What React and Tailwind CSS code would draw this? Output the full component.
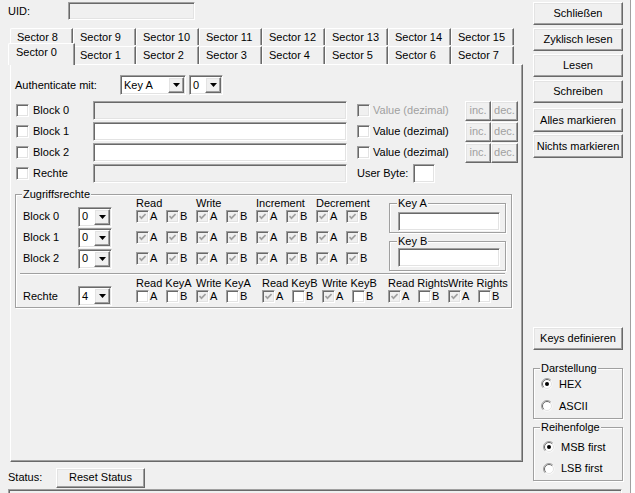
const raised =
  "bg-[#f0f0f0] border border-t-white border-l-white border-r-[#696969] border-b-[#696969] shadow-[inset_-1px_-1px_0_#a0a0a0,inset_1px_1px_0_#e3e3e3]";
const sunken =
  "border border-t-[#a0a0a0] border-l-[#a0a0a0] border-r-white border-b-white shadow-[inset_1px_1px_0_#696969,inset_-1px_-1px_0_#e3e3e3]";

const Btn = ({ children, className = "", disabled }) => (
  <button
    type="button"
    className={`${raised} shrink-0 flex items-center justify-center leading-none ${
      disabled ? "text-[#a0a0a0]" : "text-black"
    } ${className}`}
  >
    {children}
  </button>
);

const Field = ({ white, className = "" }) => (
  <div className={`${sunken} ${white ? "bg-white" : "bg-[#f0f0f0]"} ${className}`} />
);

const Combo = ({ value, className = "" }) => (
  <div className={`${sunken} bg-white flex items-stretch ${className}`}>
    <span className="flex-1 pl-[3px] flex items-center leading-none">{value}</span>
    <span className={`${raised} w-[16px] m-[1px] flex items-center justify-center`}>
      <svg width="7" height="4" viewBox="0 0 7 4">
        <path d="M0 0h7L3.5 4z" fill="black" />
      </svg>
    </span>
  </div>
);

const Check = ({ checked, grey }) => (
  <span
    className={`${sunken} ${
      grey ? "bg-[#f0f0f0]" : "bg-white"
    } w-[13px] h-[13px] shrink-0 flex items-center justify-center`}
  >
    {checked && (
      <svg width="7" height="7" viewBox="0 0 7 7">
        <path d="M0.5 3 L2.5 5.2 L6.6 1" stroke={grey ? "#a0a0a0" : "black"} strokeWidth="1.7" fill="none" />
      </svg>
    )}
  </span>
);

const Radio = ({ checked }) => (
  <svg width="12" height="12" viewBox="0 0 12 12" className="shrink-0">
    <circle cx="6" cy="6" r="5.5" fill="white" />
    <path d="M2.1 9.9 A5.5 5.5 0 0 1 9.9 2.1" stroke="#a0a0a0" fill="none" />
    <path d="M2.8 9.2 A4.5 4.5 0 0 1 9.2 2.8" stroke="#696969" fill="none" />
    <path d="M9.2 2.8 A4.5 4.5 0 0 1 2.8 9.2" stroke="#e3e3e3" fill="none" />
    {checked && <circle cx="6" cy="6" r="2" fill="black" />}
  </svg>
);

const Group = ({ title, className = "", legend = "ml-[6px]", children }) => (
  <fieldset className={`shrink-0 border border-[#a0a0a0] shadow-[1px_1px_0_white,inset_1px_1px_0_white] ${className}`}>
    <legend className={`${legend} px-[1px] leading-[12px] bg-[#f0f0f0]`}>{title}</legend>
    {children}
  </fieldset>
);

const Cell = ({ label, checked }) => (
  <span className="w-[30px] flex items-center gap-[1px]">
    <Check checked={checked} grey={checked} />
    <span className="leading-none">{label}</span>
  </span>
);

const topTabs = [8, 9, 10, 11, 12, 13, 14, 15];
const bottomTabs = [1, 2, 3, 4, 5, 6, 7];
const rechte = [
  [false, false, true, false],
  [true, false, true, false],
  [true, false, true, false],
];

export default function App() {
  return (
    <div className="w-[635px] h-[493px] bg-white overflow-hidden">
      <div className="w-[631px] h-[493px] bg-[#f0f0f0] border-r border-[#a0a0a0] text-[11px] text-black font-['Liberation_Sans',Arial,sans-serif] flex flex-col">
        <div className="flex h-[466px] shrink-0">
          {/* left part */}
          <div className="w-[533px] flex flex-col">
            <div className="flex items-center pt-[2px]">
              <span className="w-[68px] pl-[8px]">UID:</span>
              <Field className="w-[127px] h-[18px]" />
            </div>

            <div className="mt-[8px] pl-[10px] flex h-[17px]">
              {topTabs.map((n) => (
                <div
                  key={n}
                  className="w-[63px] h-[17px] border-t border-l border-t-white border-l-white border-r border-r-[#696969] shadow-[inset_-1px_0_0_#a0a0a0] rounded-tl-[2px] pl-[6px] pt-[2px] leading-[13px]"
                >
                  Sector {n}
                </div>
              ))}
            </div>
            <div className="pl-[8px] flex items-end h-[19px] relative z-10">
              <div className="w-[67px] h-[22px] mr-[-2px] mb-[-1px] bg-[#f0f0f0] border-t border-l border-t-white border-l-white border-r border-r-[#696969] shadow-[inset_-1px_0_0_#a0a0a0] rounded-tl-[2px] pl-[7px] pt-[2px] leading-[13px] relative z-10">
                Sector 0
              </div>
              {bottomTabs.map((n) => (
                <div
                  key={n}
                  className="w-[63px] h-[18px] border-t border-l border-t-white border-l-white border-r border-r-[#696969] shadow-[inset_-1px_0_0_#a0a0a0] rounded-tl-[2px] pl-[6px] pt-[2px] leading-[13px]"
                >
                  Sector {n}
                </div>
              ))}
            </div>

            {/* tab panel */}
            <div className="ml-[10px] w-[513px] h-[398px] border border-t-white border-l-white border-r-[#696969] border-b-[#696969] shadow-[inset_-1px_-1px_0_#a0a0a0] pl-[4px] pt-[10px] flex flex-col">
              <div className="flex items-center h-[20px]">
                <span className="w-[105px]">Authenticate mit:</span>
                <Combo value="Key A" className="w-[66px] h-[20px]" />
                <Combo value="0" className="w-[34px] h-[20px] ml-[3px]" />
              </div>

              <div className="mt-[5px] flex flex-col">
                {[0, 1, 2].map((i) => (
                  <div key={i} className="h-[21px] flex items-center">
                    <span className="w-[78px] flex items-center">
                      <span className="ml-[1px]">
                        <Check />
                      </span>
                      <span className="ml-[4px]">Block {i}</span>
                    </span>
                    <Field white={i > 0} className="w-[254px] h-[19px]" />
                    <span className="ml-[10px] w-[108px] flex items-center gap-[3px]">
                      <Check grey={i === 0} />
                      <span className={i === 0 ? "text-[#a0a0a0]" : ""}>Value (dezimal)</span>
                    </span>
                    <Btn disabled className="w-[26px] h-[20px]">
                      inc.
                    </Btn>
                    <Btn disabled className="w-[27px] h-[20px]">
                      dec.
                    </Btn>
                  </div>
                ))}
                <div className="h-[21px] flex items-center">
                  <span className="w-[78px] flex items-center">
                    <span className="ml-[1px]">
                      <Check />
                    </span>
                    <span className="ml-[4px]">Rechte</span>
                  </span>
                  <Field className="w-[254px] h-[19px]" />
                  <span className="ml-[10px] w-[56px]">User Byte:</span>
                  <Field white className="w-[22px] h-[19px]" />
                </div>
              </div>

              <Group title="Zugriffsrechte" className="mt-[4px] w-[497px]">
                <div className="-mt-[3px] flex items-start">
                  <div className="flex flex-col pl-[7px]">
                    <div className="h-[9px] leading-[12px] flex pl-[113px]">
                      {["Read", "Write", "Increment", "Decrement"].map((h) => (
                        <span key={h} className="w-[60px]">
                          {h}
                        </span>
                      ))}
                    </div>
                    {[0, 1, 2].map((i) => (
                      <div key={i} className="h-[21px] flex items-center">
                        <span className="w-[55px]">Block {i}</span>
                        <Combo value="0" className="w-[34px] h-[20px]" />
                        <div className="flex ml-[24px]">
                          {[0, 1, 2, 3].map((k) => (
                            <div key={k} className="flex">
                              <Cell label="A" checked />
                              <Cell label="B" checked />
                            </div>
                          ))}
                        </div>
                      </div>
                    ))}
                  </div>
                  <div className="ml-[13px] flex flex-col">
                    <Group title="Key A" legend="ml-[7px]" className="w-[117px]">
                      <Field white className="ml-[8px] mt-[3px] mb-[1px] w-[102px] h-[19px]" />
                    </Group>
                    <Group title="Key B" legend="ml-[7px]" className="w-[117px] mt-[2px]">
                      <Field white className="ml-[8px] mt-[1px] mb-[3px] w-[102px] h-[19px]" />
                    </Group>
                  </div>
                </div>

                <div className="mt-[2px] ml-[4px] w-[485px] h-[2px] border-t border-t-[#a0a0a0] border-b border-b-white" />

                <div className="mt-[2px] h-[9px] leading-[12px] flex gap-[6px] pl-[120px] whitespace-nowrap">
                  {[
                    ["Read KeyA", "Write KeyA"],
                    ["Read KeyB", "Write KeyB"],
                    ["Read Rights", "Write Rights"],
                  ].map((pair) => (
                    <div key={pair[0]} className="flex">
                      {pair.map((h) => (
                        <span key={h} className="w-[60px]">
                          {h}
                        </span>
                      ))}
                    </div>
                  ))}
                </div>
                <div className="h-[20px] flex items-center pl-[7px] mb-[1px]">
                  <span className="w-[55px]">Rechte</span>
                  <Combo value="4" className="w-[34px] h-[20px]" />
                  <div className="flex ml-[24px] gap-[6px]">
                    {rechte.map((g, gi) => (
                      <div key={gi} className="flex">
                        {g.map((c, ci) => (
                          <Cell key={ci} label={ci % 2 === 0 ? "A" : "B"} checked={c} />
                        ))}
                      </div>
                    ))}
                  </div>
                </div>
              </Group>
            </div>
          </div>

          {/* right column */}
          <div className="w-[90px] flex flex-col pt-[2px]">
            <Btn className="h-[23px]">Schließen</Btn>
            <Btn className="h-[23px] mt-[3px]">Zyklisch lesen</Btn>
            <Btn className="h-[23px] mt-[3px]">Lesen</Btn>
            <Btn className="h-[23px] mt-[3px]">Schreiben</Btn>
            <Btn className="h-[24px] mt-[5px]">Alles markieren</Btn>
            <Btn className="h-[24px] mt-[2px]">Nichts markieren</Btn>
            <Btn className="h-[23px] mt-[169px]">Keys definieren</Btn>

            <Group title="Darstellung" className="mt-[12px]">
              <div className="-mt-[1px] flex flex-col pl-[7px] pb-[1px]">
                <div className="h-[22px] flex items-center gap-[6px]">
                  <Radio checked />
                  <span>HEX</span>
                </div>
                <div className="h-[22px] flex items-center gap-[6px]">
                  <Radio />
                  <span>ASCII</span>
                </div>
              </div>
            </Group>
            <Group title="Reihenfolge" className="mt-[2px]">
              <div className="mt-[3px] flex flex-col pl-[9px] pb-[1px]">
                <div className="h-[22px] flex items-center gap-[6px]">
                  <Radio checked />
                  <span>MSB first</span>
                </div>
                <div className="h-[21px] flex items-center gap-[6px]">
                  <Radio />
                  <span>LSB first</span>
                </div>
              </div>
            </Group>
          </div>
        </div>

        {/* status */}
        <div className="h-[23px] shrink-0 flex items-center">
          <span className="w-[56px] pl-[8px]">Status:</span>
          <Btn className="w-[89px] h-[20px]">Reset Status</Btn>
        </div>
        <div className={`${sunken} shrink-0 bg-[#f0f0f0] ml-[8px] w-[614px] h-[20px]`} />
      </div>
    </div>
  );
}
